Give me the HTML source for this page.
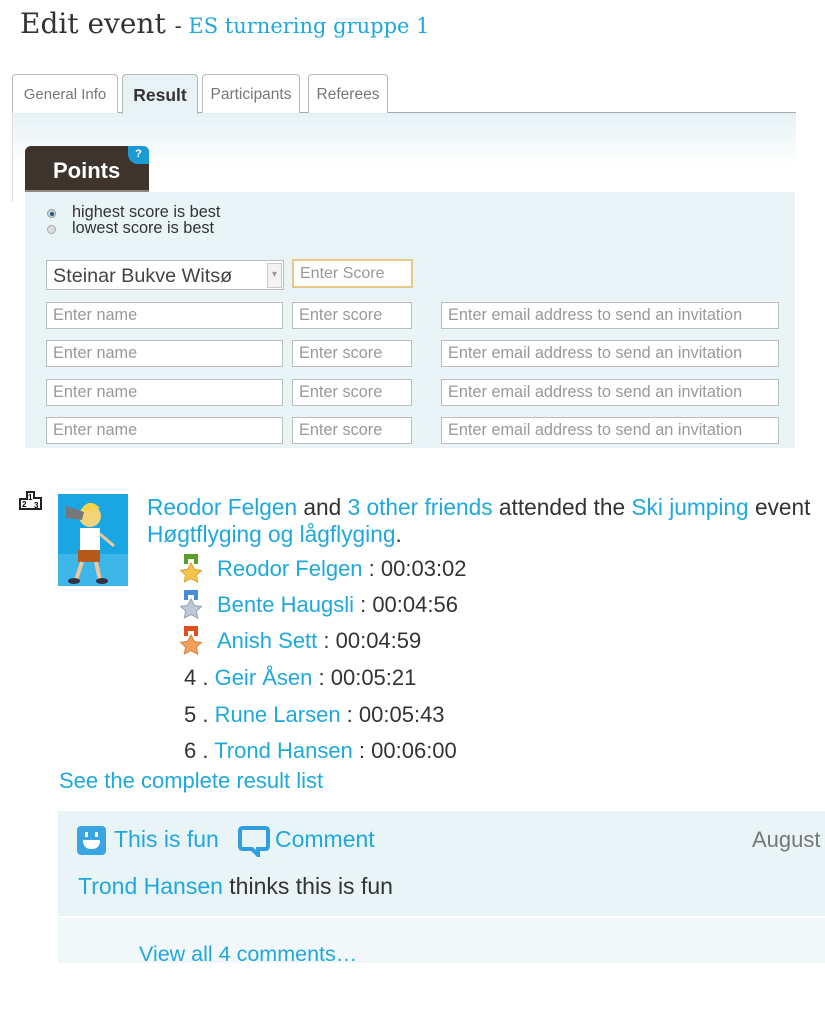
<!DOCTYPE html>
<html><head><meta charset="utf-8"><style>
*{margin:0;padding:0;box-sizing:border-box}
body{width:825px;height:1024px;background:#fff;position:relative;overflow:hidden;font-family:"Liberation Sans",Arial,sans-serif;color:#333}
.a{position:absolute;white-space:nowrap}
.b{color:#1fa8dc}
.tab{position:absolute;top:74px;height:39px;border:1px solid #bbb;border-bottom:none;border-radius:4px 4px 0 0;background:#fff;font-size:16px;color:#777;text-align:center;line-height:40px}
.in{position:absolute;height:27px;border:1px solid #bdbdbd;background:#fff;font-size:16.3px;color:#999;padding-left:6px;line-height:25px}
.med{position:absolute;left:179px;width:24px;height:30px}
.row{position:absolute;left:217px;font-size:22px}
</style></head><body>
<div class="a" style="left:20px;top:7px;font-family:'DejaVu Serif','Liberation Serif',serif;font-size:28px;color:#333">Edit event <span style="font-size:21px">- </span><span class="b" style="font-size:21px">ES turnering gruppe 1</span></div>

<div style="position:absolute;left:12px;top:112px;width:784px;height:90px;border-top:1px solid #aaa;border-left:1px solid #e0e0e0;background:linear-gradient(#e5f2f5,#fff 60%)"></div>
<div class="tab" style="left:12px;width:106px;font-size:15px">General Info</div>
<div class="tab" style="left:122px;width:76px;height:40px;background:#e8f3f6;color:#333;font-weight:bold;font-size:17.5px">Result</div>
<div class="tab" style="left:202px;width:98px;font-size:15.5px">Participants</div>
<div class="tab" style="left:308px;width:80px;font-size:15.5px">Referees</div>

<div style="position:absolute;left:25px;top:192px;width:770px;height:256px;background:#e9f4f7"></div>
<div style="position:absolute;left:25px;top:146px;width:124px;height:46px;background:#3e342c;border-radius:6px 6px 0 0;border-bottom:2px solid #8d8880;color:#fff;font-weight:bold;font-size:22px;padding:12px 0 0 28px">Points</div>
<div style="position:absolute;left:128px;top:146px;width:21px;height:18px;background:#1b9ad6;border-radius:0 6px 0 10px;color:#fff;font-size:11px;font-weight:bold;text-align:center;line-height:16px">?</div>

<div style="position:absolute;left:47px;top:209px;width:9px;height:9px;border-radius:50%;background:#c8d3dc;border:1px solid #999"><div style="margin:1.5px;width:4px;height:4px;border-radius:50%;background:#23587f"></div></div>
<div style="position:absolute;left:47px;top:225px;width:9px;height:9px;border-radius:50%;background:#ddd;border:1px solid #aaa"></div>
<div class="a" style="left:72px;top:204px;font-size:16.3px;line-height:16px;color:#333">highest score is best<br>lowest score is best</div>

<div class="in" style="left:46px;top:260px;width:238px;height:30px;color:#444;font-size:19.8px;line-height:30px">Steinar Bukve Witsø</div>
<div style="position:absolute;left:267px;top:263px;width:15px;height:25px;border:1px solid #ccc;background:#f3f3f3;color:#999;font-size:10px;text-align:center;line-height:22px">▾</div>
<div class="in" style="left:292px;top:259px;width:121px;height:29px;border:2px solid #e8c889;font-size:16px;line-height:25px">Enter Score</div>

<div class="in" style="left:46px;top:302px;width:237px">Enter name</div>
<div class="in" style="left:292px;top:302px;width:120px">Enter score</div>
<div class="in" style="left:441px;top:302px;width:338px">Enter email address to send an invitation</div>
<div class="in" style="left:46px;top:340px;width:237px">Enter name</div>
<div class="in" style="left:292px;top:340px;width:120px">Enter score</div>
<div class="in" style="left:441px;top:340px;width:338px">Enter email address to send an invitation</div>
<div class="in" style="left:46px;top:379px;width:237px">Enter name</div>
<div class="in" style="left:292px;top:379px;width:120px">Enter score</div>
<div class="in" style="left:441px;top:379px;width:338px">Enter email address to send an invitation</div>
<div class="in" style="left:46px;top:417px;width:237px">Enter name</div>
<div class="in" style="left:292px;top:417px;width:120px">Enter score</div>
<div class="in" style="left:441px;top:417px;width:338px">Enter email address to send an invitation</div>

<svg style="position:absolute;left:18px;top:490px" width="30" height="24" viewBox="0 0 30 24"><path d="M9 2h7v6h7v11H2V9h7z" fill="#fff" stroke="#222" stroke-width="2"/><text x="10" y="10" font-size="8" font-family="Liberation Sans" font-weight="bold">1</text><text x="4" y="17" font-size="8" font-family="Liberation Sans" font-weight="bold">2</text><text x="16" y="18" font-size="8" font-family="Liberation Sans" font-weight="bold">3</text></svg>
<svg style="position:absolute;left:58px;top:494px" width="70" height="92" viewBox="0 0 70 92"><rect width="70" height="92" fill="#19a6e3"/><rect y="60" width="70" height="32" fill="#3fb6e8"/><circle cx="32" cy="22" r="11" fill="#f4d27a"/><path d="M22 18q8-16 20-4" fill="#f7d548"/><path d="M8 12l18 6-2 8-16-2z" fill="#777"/><rect x="22" y="34" width="20" height="24" fill="#fff"/><rect x="20" y="56" width="22" height="12" fill="#b55a1b"/><path d="M24 68l-6 18M38 68l4 18" stroke="#f0c59a" stroke-width="4"/><ellipse cx="16" cy="87" rx="6" ry="3" fill="#334"/><ellipse cx="44" cy="87" rx="6" ry="3" fill="#334"/><path d="M42 40l14 12" stroke="#f0c59a" stroke-width="3"/></svg>

<div class="a" style="left:147px;top:494px;font-size:22.7px;line-height:27px"><span class="b">Reodor Felgen</span> and <span class="b">3 other friends</span> attended the <span class="b">Ski jumping</span> event<br><span class="b">Høgtflyging og lågflyging</span>.</div>

<svg class="med" style="top:553px" viewBox="0 0 24 30"><path d="M5 1h14v10h-4v-5h-6v5H5z" fill="#5a9e2a"/><path d="M12 10l3.4 6.5 7 1-5 4.6 1.3 7L12 25.6 5.3 29l1.3-7-5-4.6 7-1z" fill="#f5c34e" stroke="#e0a030"/></svg>
<svg class="med" style="top:589px" viewBox="0 0 24 30"><path d="M5 1h14v10h-4v-5h-6v5H5z" fill="#4a8ad8"/><path d="M12 10l3.4 6.5 7 1-5 4.6 1.3 7L12 25.6 5.3 29l1.3-7-5-4.6 7-1z" fill="#bcc8d6" stroke="#94a2b4"/></svg>
<svg class="med" style="top:625px" viewBox="0 0 24 30"><path d="M5 1h14v10h-4v-5h-6v5H5z" fill="#e0501e"/><path d="M12 10l3.4 6.5 7 1-5 4.6 1.3 7L12 25.6 5.3 29l1.3-7-5-4.6 7-1z" fill="#f2a05a" stroke="#d88040"/></svg>
<div class="row" style="top:556px"><span class="b">Reodor Felgen</span> : 00:03:02</div>
<div class="row" style="top:592px"><span class="b">Bente Haugsli</span> : 00:04:56</div>
<div class="row" style="top:628px"><span class="b">Anish Sett</span> : 00:04:59</div>
<div class="row" style="left:184px;top:665px">4 . <span class="b">Geir Åsen</span> : 00:05:21</div>
<div class="row" style="left:184px;top:702px">5 . <span class="b">Rune Larsen</span> : 00:05:43</div>
<div class="row" style="left:184px;top:738px">6 . <span class="b">Trond Hansen</span> : 00:06:00</div>
<div class="a b" style="left:59px;top:768px;font-size:22px">See the complete result list</div>

<div style="position:absolute;left:58px;top:811px;width:767px;height:105px;background:#e9f4f7"></div>
<div style="position:absolute;left:58px;top:918px;width:767px;height:45px;background:#f2f8fa"></div>
<svg style="position:absolute;left:77px;top:826px" width="30" height="30" viewBox="0 0 30 30"><rect width="29" height="29" rx="4" fill="#3aa5e3"/><rect x="8" y="6" width="3" height="5" fill="#fff"/><rect x="18" y="6" width="3" height="5" fill="#fff"/><path d="M6 14h17q0 9-8.5 9T6 14z" fill="#fff"/></svg>
<div class="a b" style="left:114px;top:826px;font-size:23px">This is fun</div>
<svg style="position:absolute;left:238px;top:825px" width="32" height="32" viewBox="0 0 32 32"><path d="M5 3h22q3 0 3 3v15q0 3-3 3H20v6l-6-6H5q-3 0-3-3V6q0-3 3-3z" fill="none" stroke="#2f9fe0" stroke-width="4"/></svg>
<div class="a b" style="left:275px;top:826px;font-size:23px">Comment</div>
<div class="a" style="left:752px;top:827px;font-size:22px;color:#777">August</div>
<div class="a" style="left:78px;top:873px;font-size:23px"><span class="b">Trond Hansen</span> thinks this is fun</div>
<div class="a b" style="left:139px;top:942px;font-size:21.5px">View all 4 comments…</div>
</body></html>
